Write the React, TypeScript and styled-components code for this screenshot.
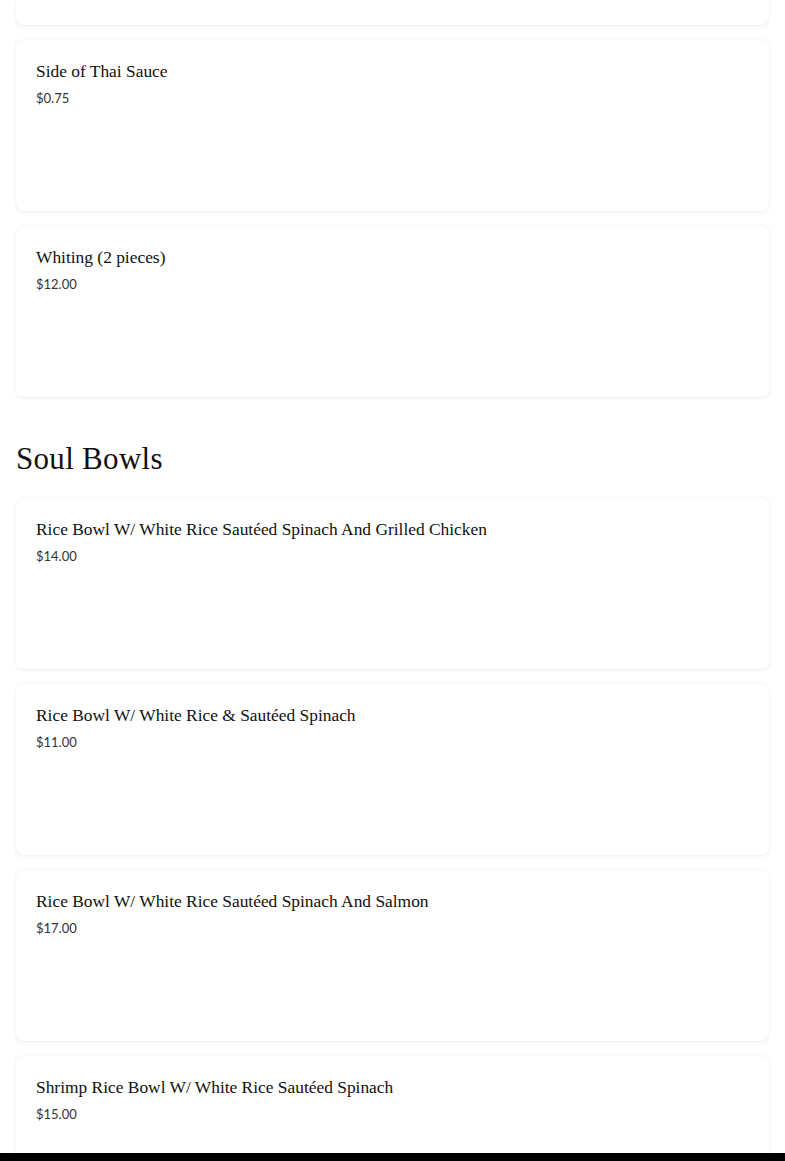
import React from "react";
import styled, { createGlobalStyle } from "styled-components";

const Global = createGlobalStyle`
  html, body { margin: 0; padding: 0; background: #ffffff; }
  body { overflow: hidden; }
`;

const Page = styled.main`
  padding: 0 16px;
  font-family: "Liberation Serif", "DejaVu Serif", serif;
  color: #1a1a1a;
`;

const Section = styled.section<{ $first?: boolean }>`
  margin-top: ${(p) => (p.$first ? "0" : "40px")};
`;

const Heading = styled.h2`
  margin: 0 0 17px;
  font-family: "Liberation Serif", "DejaVu Serif", serif;
  font-weight: 400;
  font-size: 31px;
  line-height: 44px;
  letter-spacing: 0.3px;
  color: #111;
`;

const List = styled.div`
  display: flex;
  flex-direction: column;
  gap: 15px;
`;

const Card = styled.article<{ $scrolled?: boolean }>`
  box-sizing: border-box;
  height: ${(p) => (p.$scrolled ? "25px" : "171px")};
  padding: ${(p) => (p.$scrolled ? "0" : "19px 20px")};
  background: #fff;
  border-radius: ${(p) => (p.$scrolled ? "0 0 8px 8px" : "8px")};
  box-shadow: 0 1px 5px rgba(0, 0, 0, 0.07), 0 0 2px rgba(0, 0, 0, 0.04);
`;

const Title = styled.h3`
  margin: 0;
  font-family: "Liberation Serif", "DejaVu Serif", serif;
  font-weight: 400;
  font-size: 17.4px;
  line-height: 24px;
  color: #111;
`;

const Price = styled.div`
  margin-top: 5px;
  font-family: Lato, "Noto Sans", sans-serif;
  font-weight: 400;
  font-size: 13px;
  line-height: 20px;
  color: #333;
`;

const BottomBar = styled.div`
  position: fixed;
  left: 0;
  right: 0;
  bottom: 0;
  height: 8px;
  background: #000;
`;

type Item = { name: string; price: string };

const sides: Item[] = [
  { name: "Side of Thai Sauce", price: "$0.75" },
  { name: "Whiting (2 pieces)", price: "$12.00" },
];

const bowls: Item[] = [
  { name: "Rice Bowl W/ White Rice Sautéed Spinach And Grilled Chicken", price: "$14.00" },
  { name: "Rice Bowl W/ White Rice & Sautéed Spinach", price: "$11.00" },
  { name: "Rice Bowl W/ White Rice Sautéed Spinach And Salmon", price: "$17.00" },
  { name: "Shrimp Rice Bowl W/ White Rice Sautéed Spinach", price: "$15.00" },
];

const MenuCard = ({ item }: { item: Item }) => (
  <Card>
    <Title>{item.name}</Title>
    <Price>{item.price}</Price>
  </Card>
);

export default function App() {
  return (
    <>
      <Global />
      <Page>
        <Section $first>
          <List>
            <Card $scrolled aria-hidden />
            {sides.map((i) => (
              <MenuCard key={i.name} item={i} />
            ))}
          </List>
        </Section>
        <Section>
          <Heading>Soul Bowls</Heading>
          <List>
            {bowls.map((i) => (
              <MenuCard key={i.name} item={i} />
            ))}
          </List>
        </Section>
      </Page>
      <BottomBar />
    </>
  );
}
